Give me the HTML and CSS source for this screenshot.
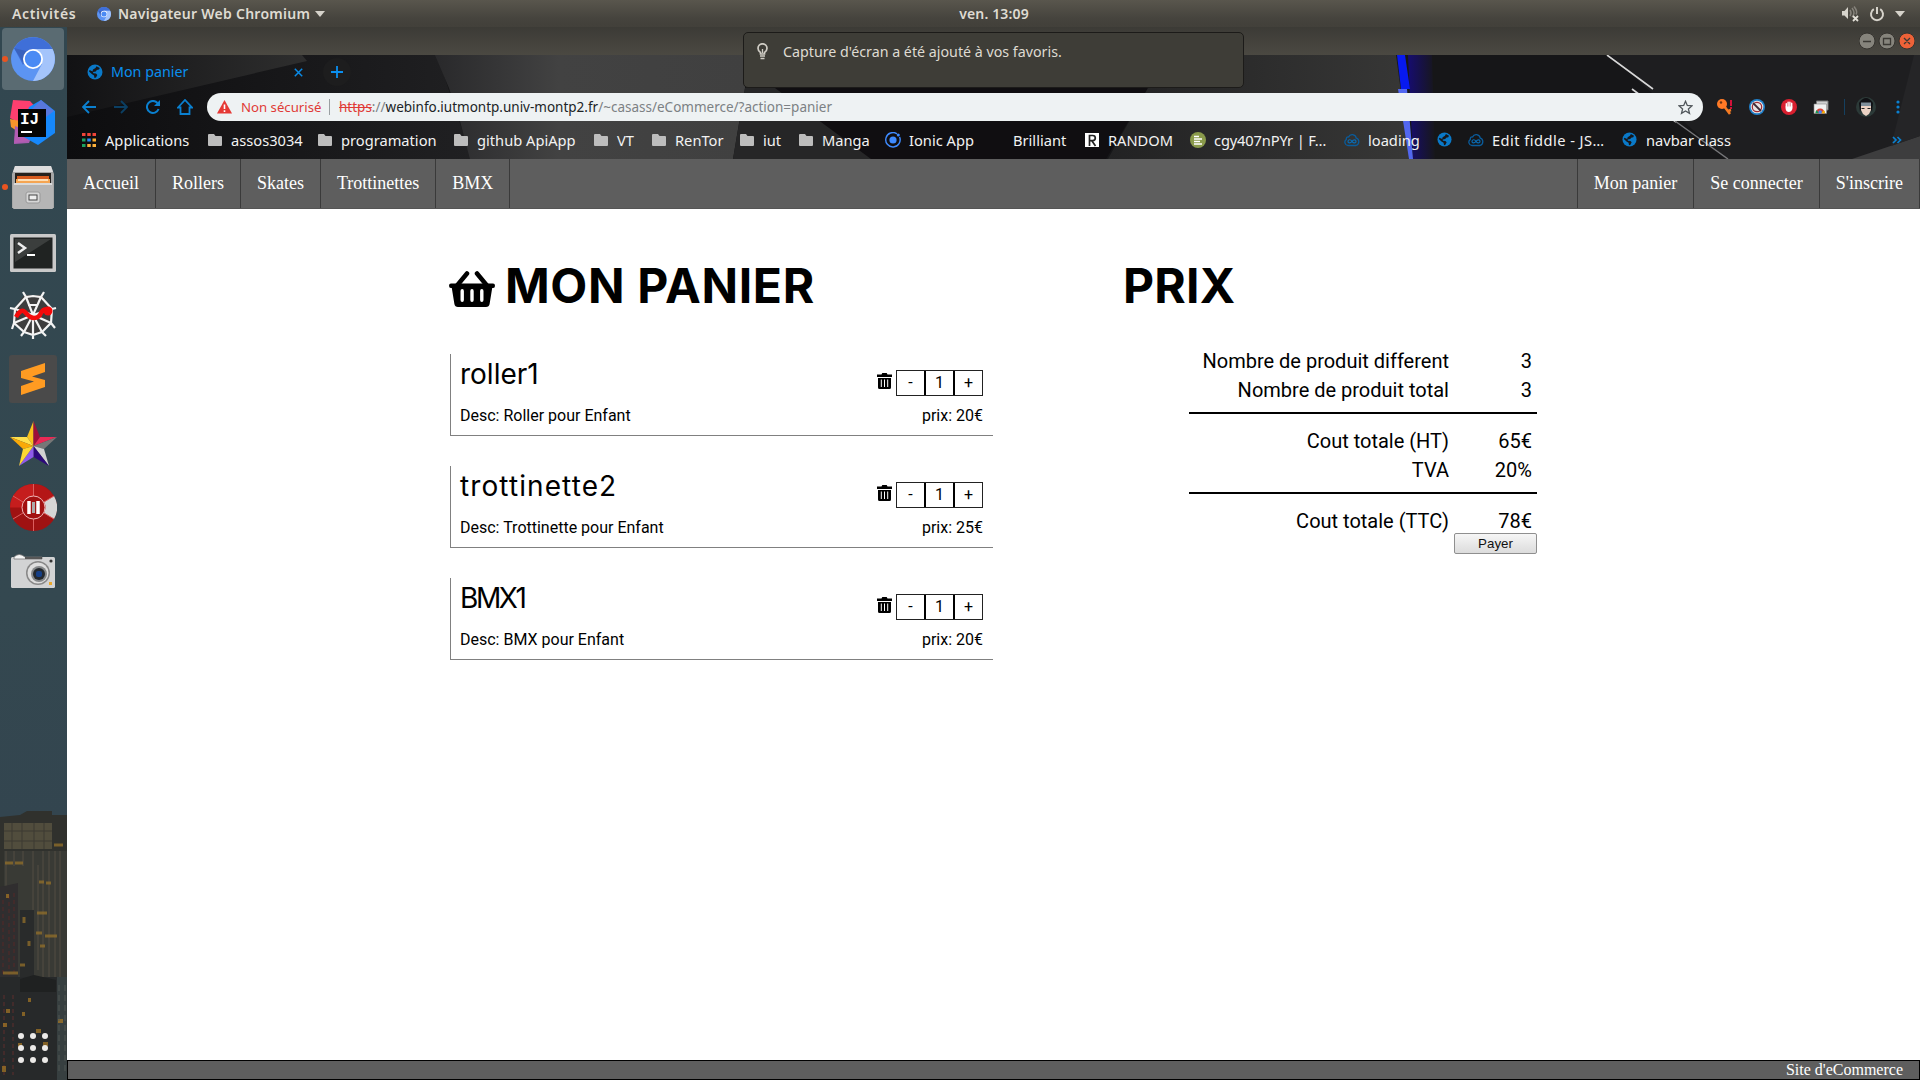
FILE: index.html
```
<!DOCTYPE html>
<html lang="fr">
<head>
<meta charset="utf-8">
<title>Mon panier</title>
<link rel="stylesheet" href="styles.css">
</head>
<body>
<svg class="defs" width="0" height="0">
  <symbol id="chromium" viewBox="0 0 44 44">
    <circle cx="22" cy="22" r="22" fill="#5c94f3"/>
    <path d="M3 11A22 22 0 0 1 41.500 12H22L12 28z" fill="#3f6fd8"/>
    <path d="M22 12H41.500A22 22 0 0 1 22 44L31 27z" fill="#a4c4fb"/>
    <path d="M3 11L13 27 15 14z" fill="#3a62bd"/>
    <circle cx="22" cy="22" r="10" fill="#fff"/><circle cx="22" cy="22" r="8.200" fill="#4a8af4"/>
  </symbol>
  <symbol id="folder" viewBox="0 0 14 14"><path d="M1 1h5l1.500 2H13a1 1 0 0 1 1 1v8a1 1 0 0 1-1 1H1a1 1 0 0 1-1-1V2a1 1 0 0 1 1-1z" fill="#bdbdbd"/></symbol>
  <symbol id="globe" viewBox="0 0 16 16"><circle cx="8" cy="8" r="7.500" fill="#0a79c8"/><path d="M9.500 2.200L12.800 4 12 5.500 9.800 6 8.800 7.500 6 8 6.300 9.300 9 9.500 10.300 11 9 13.500 7.500 14 7 11.500 4.800 10 2 7.500 2.600 6 5.500 7.500 6 5.500 8.500 4z" fill="#17171a"/></symbol>
  <symbol id="cloud" viewBox="0 0 16 14"><path d="M4 12.500a3.300 3.300 0 0 1-1.700-6C2 4.500 3.500 3.500 4.600 3.900 6 .5 11.500.7 12.300 5.200c3.300 1 3.500 6-.3 7.300z" fill="none" stroke="#0a5c9c" stroke-width="1.300"/><path d="M8 8.300C6.500 6 4 6.500 4 8.400s2.500 2.200 4 0 4-1.900 4 0-2.500 2.200-4-.1" fill="none" stroke="#0a6cb4" stroke-width="1.200"/></symbol>
  <symbol id="trash" viewBox="0 0 15 16"><path d="M0 1.500h4.500L5.300 0h4.400l.8 1.500H15V4H0z"/><path fill-rule="evenodd" d="M1 5h13v9.500a1.500 1.500 0 0 1-1.500 1.500h-10A1.500 1.500 0 0 1 1 14.500zM3.800 6.500v7.500h1V6.500zM7 6.500v7.500h1V6.500zm3.200 0v7.500h1V6.500z"/></symbol>
</svg>

<header class="topbar">
  <div class="top-left">
    <span class="activities">Activités</span>
    <svg width="14" height="14"><use href="#chromium"/></svg>
    <span class="appname">Navigateur Web Chromium</span>
    <svg width="10" height="6" viewBox="0 0 10 6"><path d="M0 0h10L5 6z" fill="#d6d3cb"/></svg>
  </div>
  <span class="clock">ven. 13:09</span>
  <div class="top-right">
    <svg width="18" height="17" viewBox="0 0 18 17"><path d="M1 6h2.500L7 2v12L3.500 10.500H1z" fill="#d6d3cb"/><path d="M9 5q2 3 0 6M11 3q4 5 0 9M13 1.500q4 5 2 8" fill="none" stroke="#85827a" stroke-width="1.500"/><path d="M12 11l5 5m0-5l-5 5" stroke="#e2dfd7" stroke-width="1.800"/></svg>
    <svg width="16" height="16" viewBox="0 0 16 16"><path d="M4.800 3.200a6 6 0 1 0 6.400 0M8 1v7" fill="none" stroke="#d6d3cb" stroke-width="2"/></svg>
    <svg width="10" height="6" viewBox="0 0 10 6"><path d="M0 0h10L5 6z" fill="#d6d3cb"/></svg>
  </div>
</header>

<div class="workspace">
  <nav class="dock">
    <svg class="skyline" width="67" height="275" viewBox="0 0 67 275">
      <path d="M0 12L20 10 27 6h25v4h15v265H0z" fill="#30312d"/>
      <path d="M4 18h48v26H4z" fill="#514d3d"/><path d="M4 26h48M4 36h48M12 18v26M22 18v26M34 18v26M44 18v26" stroke="#3d3b32"/>
      <path d="M4 46h63v126H4z" fill="#393a35"/>
      <path d="M6 46v75M14 46v15M23 46v15M33 46v120M38 60v105M43 46v126M49 46v126M55 46v126M60 46v126" stroke="#4d4940" stroke-width="1.300"/>
      <path d="M0 82l18-4v110H0z" fill="#302e2f"/><path d="M20 105h14v80H20z" fill="#292b2b"/>
      <path d="M0 172h57v103H0z" fill="#27292a"/><path d="M57 172h10v103H57z" fill="#373f40"/>
      <path d="M20 174l14-4 22 5v12H20z" fill="#1f2121"/>
      <path d="M3 95v75M9 90v80M14 88v80M4 190v80M13 190v80" stroke="#422b2b" stroke-width="2" stroke-dasharray="4 3"/>
      <path d="M5 58h8M15 58h8M54 40h9M39 77h5M46 78h5M37 108h10M36 128h6M45 131h12M40 141h5M24 112v6M29 136v5M20 160h5M3 168h15" stroke="#93702a" stroke-width="3" opacity=".75"/>
      <path d="M6 91h3M6 206h4M22 209h3M28 195h3M3 220h4M36 226h5M18 240h4M4 261v6M58 216h5M43 239h5" stroke="#a97a25" stroke-width="4" opacity=".7"/>
      <path d="M59 180v90M65 180v90" stroke="#515753" stroke-dasharray="6 4"/>
    </svg>
    <div class="slot active running"><svg width="44" height="44"><use href="#chromium"/></svg></div>
    <div class="slot"><svg width="46" height="48" viewBox="0 0 46 48">
      <path d="M3 1l17 1 8 9-8 18L0 19z" fill="#fe3f6f"/><path d="M0 20l10 2v12L1 28z" fill="#f7942b"/><path d="M5 27l18 7-4 10-15 1z" fill="#a95bb0"/>
      <path d="M31 1L45 12v22L28 46 10 36 19 8z" fill="#1688fb"/><path d="M31 1L44 12 28 24 18 14z" fill="#5877dc"/><path d="M6 28l4 8 10 6-16 2z" fill="#b45cb2"/>
      <rect x="8" y="10" width="28" height="28" fill="#050505"/><rect x="11" y="32" width="11" height="2" fill="#fff"/>
      <text class="ij" x="10" y="25">IJ</text></svg></div>
    <div class="slot running"><svg width="44" height="46" viewBox="0 0 44 46">
      <path d="M4 2h36l3 8v34H1V10z" fill="#a7a7a7"/><path d="M4 2h36l2 6H2z" fill="#dedede"/><rect x="4" y="9" width="36" height="14" fill="#26211d"/>
      <path d="M6 12h32v10H6z" fill="#d65b1f"/><path d="M5 15h34v6H5z" fill="#f5a552"/><path d="M7 16h30" stroke="#fff3da" stroke-width="1.500"/>
      <rect x="2" y="19" width="40" height="26" rx="1" fill="#b5b5b5"/><path d="M3 20h38" stroke="#dadada" stroke-width="2"/>
      <rect x="15" y="28" width="14" height="11" rx="2" fill="#d7d7d7" stroke="#999"/><rect x="18" y="31" width="8" height="5" fill="#eee" stroke="#444"/></svg></div>
    <div class="slot terminal"><svg width="46" height="38" viewBox="0 0 46 38"><rect width="46" height="38" rx="1.500" fill="#c9c9c9"/><rect x="3.500" y="3.500" width="39" height="31" fill="#202322"/><path d="M5 5h36L5 28z" fill="#3b3e3d"/><path d="M8 9l7 5-7 5" fill="none" stroke="#eee" stroke-width="2.500"/><path d="M17 21h8" stroke="#fff" stroke-width="2"/></svg></div>
    <div class="slot"><svg width="48" height="48" viewBox="0 0 48 48"><path d="M15 4h18l10 13-1 15-9 9-9 3-9-3-10-9V18z" fill="#3d3d3d"/>
      <g fill="none" stroke="#f3f3f3" stroke-width="2.200"><path d="M14 1l3 5 7-1 8 1 3-5M17 6L6 18l-5-1M6 18l-1 14-2 6M5 32l10 9-3 4M15 41l9 3v4M24 44l9-3 4 4M33 41l9-9 4 5M42 32l1-14 4-1M43 18L32 6"/><path d="M17 6l7 18 8-18M6 18l18 6 19-6M5 32l19-8 18 8M15 41l9-17 9 17M24 24v20M19 14h10"/></g>
      <path d="M7 26q5-9 9-5 5 6 9 6 5 0 7-5 3-6 10-2" fill="none" stroke="#f40a0a" stroke-width="4.500"/><circle cx="39" cy="20" r="4.500" fill="#f40a0a"/></svg></div>
    <div class="slot"><svg width="48" height="48" viewBox="0 0 48 48"><rect width="48" height="48" rx="3" fill="#4a4a4a"/><path d="M12 16l24-8v9l-13 4.500L36 25v7L12 40v-9l13-4.500L12 23z" fill="#ff9b22"/></svg></div>
    <div class="slot"><svg width="47" height="45" viewBox="0 0 47 45">
      <path d="M23.500 0v25L17 16z" fill="#fbc21c"/><path d="M23.500 0v25L30 16z" fill="#9e0f3a"/><path d="M17 16H0l23.500 9z" fill="#ffe04d"/><path d="M0 16l13 12 10.500-3z" fill="#f9a908"/><path d="M30 16h17L23.500 25z" fill="#e92a55"/><path d="M47 16L34 28l-10.500-3z" fill="#777"/><path d="M34 28l5 17L23.500 25z" fill="#d2d2d2"/><path d="M39 45l-15.500-9V25z" fill="#2d087b"/><path d="M23.500 36L9 45l14.500-20z" fill="#8f5aea"/><path d="M9 45l4-17 10.500-3z" fill="#ffd832"/></svg></div>
    <div class="slot"><svg width="47" height="47" viewBox="0 0 47 47"><circle cx="23.500" cy="23.500" r="23.500" fill="#9f1212"/><path d="M23.500 0A23.500 23.500 0 0 0 0 23.500h23.500z" fill="#c51d1d"/><path d="M23.500 0a23.500 23.500 0 0 1 20 12L23.500 23.500z" fill="#b41616"/><path d="M44 12a23.500 23.500 0 0 1 0 23L34 29q3-6 0-11z" fill="#d6d6d6"/><path d="M23.500 0v12M23.500 35v12M3 12l10 6M3 35l10-6M44 12l-10 6M44 35l-10-6" stroke="#db5e5e"/><circle cx="23.500" cy="23.500" r="11.500" fill="#a31111" stroke="#f0b7b7"/><path d="M19 17v13M28 17v13" stroke="#fff" stroke-width="3.500"/><path d="M23.500 18v11" stroke="#aaa" stroke-width="3"/></svg></div>
    <div class="slot"><svg width="44" height="34" viewBox="0 0 44 34"><rect y="3" width="44" height="31" rx="1.500" fill="#d2d3d4"/><path d="M3 3q5-5 11 0h17v2H3z" fill="#f4f4f4" stroke="#777" stroke-width=".8"/><path d="M14 4h17" stroke="#333" stroke-width="1.500"/><circle cx="27" cy="19" r="12" fill="#888"/><circle cx="27" cy="19" r="10.500" fill="#dedede"/><circle cx="28" cy="20" r="8" fill="#85888a"/><circle cx="28" cy="20" r="6" fill="#24292f"/><rect x="25" y="17" width="6" height="6" rx="2" fill="#153f87"/><circle cx="40" cy="7" r="1.600" fill="#333"/><rect x="38" y="28" width="3" height="3" fill="#eba92c"/></svg></div>
    <div class="apps-grid"><i></i><i></i><i></i><i></i><i></i><i></i><i></i><i></i><i></i></div>
  </nav>

  <div class="window">
    <div class="titlebar">
      <svg width="56" height="18" viewBox="0 0 56 18"><g stroke="#35332f"><circle cx="8" cy="9" r="8" fill="#86847c"/><circle cx="28" cy="9" r="8" fill="#86847c"/><circle cx="48" cy="9" r="8" fill="#ee6238"/></g><path d="M4 9.500h8M24.500 6.500h7v6h-7zM45 6l6 6m0-6l-6 6" fill="none" stroke="#3b3934" stroke-width="1.300"/></svg>
    </div>

    <div class="chrome">
      <svg class="backdrop" width="1853" height="104" viewBox="67 55 1853 104">
        <defs>
          <linearGradient id="g1"><stop offset="0" stop-color="#121214"/><stop offset="1" stop-color="#2e2e2e"/></linearGradient>
          <linearGradient id="g2"><stop offset="0" stop-color="#29292b"/><stop offset=".4" stop-color="#424242"/><stop offset="1" stop-color="#404040"/></linearGradient>
          <linearGradient id="g3"><stop offset="0" stop-color="#222223"/><stop offset="1" stop-color="#373736"/></linearGradient>
          <linearGradient id="g4"><stop offset="0" stop-color="#160c70"/><stop offset="1" stop-color="#17171a"/></linearGradient>
          <linearGradient id="g5"><stop offset="0" stop-color="#0d0d0f"/><stop offset="1" stop-color="#202022"/></linearGradient>
        </defs>
        <path d="M67 55h1853v104H67z" fill="#161618"/>
        <path d="M67 55h370l35 104H67z" fill="url(#g5)"/>
        <path d="M67 55h235l5 6L67 117z" fill="url(#g1)"/>
        <path d="M435 55h310v33l-6 35-6 36H470L460 121 449 88z" fill="url(#g2)"/>
        <path d="M745 88h245v35h-5l-40 36H733z" fill="#262627"/>
        <path d="M775 88l96 71h235l42-71z" fill="#100e11"/>
        <path d="M1148 88l35-33h213l14 104h-302z" fill="url(#g3)"/>
        <path d="M1408 55h24l3 104h-22z" fill="url(#g4)"/>
        <path d="M1397 55h8l5 34h-9z" fill="#0719f0"/><path d="M1398 89h9l6 70h-4z" fill="#5267f0"/>
        <path d="M1610 55h310v104h-195z" fill="#1e1e20"/>
        <path d="M1607 55l46 34M1632 89l44 33" stroke="#d8d8d8" stroke-width="1.600"/><path d="M1675 121l53 38" stroke="#77777a" stroke-width="1.400"/>
        <path d="M1852 159l68-23v23z" fill="#3d3d3e"/><path d="M1914 55h6v81l-29 10z" fill="#252527"/>
      </svg>

      <div class="tabstrip">
        <svg width="16" height="16"><use href="#globe"/></svg>
        <span class="tab-title">Mon panier</span>
        <svg class="tab-close" width="9" height="9" viewBox="0 0 9 9"><path d="M.8.8l7.400 7.400m0-7.400L.8 8.200" stroke="#0a8ae6" stroke-width="1.500"/></svg>
        <span class="new-tab"><svg width="12" height="12" viewBox="0 0 12 12"><path d="M6 0v12M0 6h12" stroke="#0a8ff0" stroke-width="1.800"/></svg></span>
      </div>

      <div class="toolbar">
        <svg width="14" height="14" viewBox="0 0 14 14"><path d="M14 7H1.500M7 1L1 7l6 6" fill="none" stroke="#0a80d0" stroke-width="1.900"/></svg>
        <svg width="14" height="14" viewBox="0 0 14 14"><path d="M0 7h12.500M7 1l6 6-6 6" fill="none" stroke="#0b3f63" stroke-width="1.900"/></svg>
        <svg width="14" height="14" viewBox="0 0 14 14"><path d="M12.600 9A6 6 0 1 1 11.500 3" fill="none" stroke="#0a80d0" stroke-width="2"/><path d="M14 0v6H8z" fill="#0a80d0"/></svg>
        <svg class="home" width="16" height="16" viewBox="0 0 16 16"><path d="M1 8.500L8 1l7 7.500h-2.500V15h-9V8.500z" fill="none" stroke="#0a80d0" stroke-width="1.800"/></svg>
        <div class="omnibox">
          <svg width="15" height="14" viewBox="0 0 15 14"><path d="M7.500 0L15 13.500H0z" fill="#e53935"/><path d="M7.500 4.500v4.500M7.500 10.200v1.800" stroke="#fff" stroke-width="1.600"/></svg>
          <span class="insecure">Non sécurisé</span>
          <span class="divider"></span>
          <span class="url"><span class="scheme">https</span><span class="sep">://</span><span class="host">webinfo.iutmontp.univ-montp2.fr</span><span class="path">/~casass/eCommerce/?action=panier</span></span>
          <svg width="15" height="15" viewBox="0 0 15 15"><path d="M7.500 1.300l1.800 4.200 4.600.4-3.500 3 1.100 4.500-4-2.400-4 2.400 1.100-4.500-3.500-3 4.600-.4z" fill="none" stroke="#50565a" stroke-width="1.300"/></svg>
        </div>
        <div class="extensions">
          <svg width="16" height="16" viewBox="0 0 16 16"><path d="M7 7l6 8M11 12l3-1" stroke="#f47a22" stroke-width="2.600"/><circle cx="5" cy="5" r="5" fill="#ff7a26"/><circle cx="4" cy="3.500" r="1.200" fill="#6b3513"/><path d="M14 1v6M14 8v2" stroke="#d3123a" stroke-width="2"/></svg>
          <svg width="16" height="16" viewBox="0 0 16 16"><circle cx="8" cy="8" r="8" fill="#1f7fc9"/><circle cx="8" cy="8" r="6.300" fill="#e9e4e4"/><circle cx="8" cy="8" r="4.700" fill="none" stroke="#9e2b34" stroke-width="1.200"/><path d="M4 4l8 8" stroke="#3c2c38" stroke-width="1.800"/></svg>
          <svg width="16" height="16" viewBox="0 0 16 16"><circle cx="8" cy="8" r="8" fill="#d81f2f"/><path d="M5.300 8V4.800M7.100 8V3.300M8.900 8V3.300M10.700 8V4.300" stroke="#fff" stroke-width="1.400" stroke-linecap="round"/><path d="M4.600 7.500h6.800V10q-1 3-3.600 3T4.600 10z" fill="#fff"/></svg>
          <svg width="16" height="16" viewBox="0 0 16 16"><path d="M3.500 2h11.500v9H3.500z" fill="#d0d0d0" stroke="#777"/><path d="M1 5h12.500v9.500H1z" fill="#f2f2f2" stroke="#888" stroke-width=".6"/><path d="M2.500 14.200a4.700 4.700 0 0 1 9.400 0z" fill="#db4437"/><path d="M2.500 14.200q0-2 1.200-3.200l2.300 3.200z" fill="#0f9d58"/><path d="M11.900 14.200q0-2-1.200-3.200l-2.300 3.200z" fill="#f4b400"/><circle cx="7.200" cy="13" r="1.700" fill="#4285f4"/></svg>
          <span class="ext-line"></span>
          <svg width="20" height="20" viewBox="0 0 20 20"><circle cx="10" cy="10" r="10" fill="#2c3a38"/><path d="M3 6q7-10 14 0l-1 9-2-5-4-2-4 2-2 5z" fill="#101014"/><path d="M5 9h10v4l-2 4-3 2-3-2-2-4z" fill="#ecd2c4"/><path d="M5 5.500h10V9H5z" fill="#7f8e9a"/><path d="M5.500 11.500h3M11.500 11.500h3" stroke="#222" stroke-width="1.200"/></svg>
          <svg width="4" height="14" viewBox="0 0 4 14"><circle cx="2" cy="2" r="1.600" fill="#0a80d0"/><circle cx="2" cy="7" r="1.600" fill="#0a80d0"/><circle cx="2" cy="12" r="1.600" fill="#0a80d0"/></svg>
        </div>
      </div>

      <div class="bookmarks">
        <span class="bm"><svg width="14" height="14" viewBox="0 0 14 14"><path d="M0 1.500h14" stroke="#f04438" stroke-width="3" stroke-dasharray="3.500 1.750"/><path d="M0 7h3.500" stroke="#1aa260" stroke-width="3"/><path d="M5.250 7h3.500" stroke="#2a8af4" stroke-width="3"/><path d="M10.500 7H14" stroke="#f9ab2d" stroke-width="3"/><path d="M0 12.500h3.500" stroke="#1aa260" stroke-width="3"/><path d="M5.250 12.500H14" stroke="#fbb03b" stroke-width="3" stroke-dasharray="3.500 1.750"/></svg>Applications</span>
        <span class="bm"><svg width="14" height="14"><use href="#folder"/></svg>assos3034</span>
        <span class="bm"><svg width="14" height="14"><use href="#folder"/></svg>programation</span>
        <span class="bm"><svg width="14" height="14"><use href="#folder"/></svg>github ApiApp</span>
        <span class="bm"><svg width="14" height="14"><use href="#folder"/></svg>VT</span>
        <span class="bm"><svg width="14" height="14"><use href="#folder"/></svg>RenTor</span>
        <span class="bm"><svg width="14" height="14"><use href="#folder"/></svg>iut</span>
        <span class="bm"><svg width="14" height="14"><use href="#folder"/></svg>Manga</span>
        <span class="bm site"><svg width="16" height="16" viewBox="0 0 16 16"><path d="M12 1.800A7.200 7.200 0 1 0 14.600 5" fill="none" stroke="#3f8bff" stroke-width="1.400"/><circle cx="8" cy="8" r="3.600" fill="#3f8bff"/><circle cx="13.300" cy="3" r="1.500" fill="#3f8bff"/></svg>Ionic App</span>
        <span class="bm site"><span class="no-icon"></span>Brilliant</span>
        <span class="bm"><svg width="14" height="14" viewBox="0 0 14 14"><path d="M0 0h14v14H0z" fill="#fff"/><path d="M4.500 13V2.500h3.200a2.500 2.500 0 0 1 0 5.200H4.500M7 8l3.500 5" fill="none" stroke="#222" stroke-width="1.700"/></svg>RANDOM</span>
        <span class="bm site code"><svg width="16" height="16" viewBox="0 0 16 16"><circle cx="8" cy="8" r="8" fill="#8a9a4b"/><path d="M4 4.500h5M4 7h8M4 9.500h6M4 12h8" stroke="#fff" stroke-width="1.300"/></svg>cgy407nPYr | F…</span>
        <span class="bm site"><svg width="16" height="14"><use href="#cloud"/></svg>loading</span>
        <span class="bm"><svg width="15" height="15"><use href="#globe"/></svg></span>
        <span class="bm site fiddle"><svg width="16" height="14"><use href="#cloud"/></svg>Edit fiddle - JS…</span>
        <span class="bm"><svg width="15" height="15"><use href="#globe"/></svg>navbar class</span>
        <svg width="10" height="8" viewBox="0 0 10 8"><path d="M1 1l3 3-3 3M5.500 1l3 3-3 3" fill="none" stroke="#0a80d0" stroke-width="1.700"/></svg>
      </div>
    </div>

    <div class="page">
      <ul class="site-nav">
        <li>Accueil</li><li>Rollers</li><li>Skates</li><li>Trottinettes</li><li>BMX</li>
        <li class="spacer"></li>
        <li>Mon panier</li><li>Se connecter</li><li>S'inscrire</li>
      </ul>
      <main class="content">
        <section class="basket">
          <h1><svg width="46" height="36" viewBox="0 0 46 36"><path d="M8.500 14L18 2.500M37.500 14L28 2.500" stroke="#000" stroke-width="4.500" stroke-linecap="round"/><path fill-rule="evenodd" d="M2 12.500h42q2 0 2 2.300T44 17h-.8l-2.600 16q-.5 3-3.600 3H9q-3.100 0-3.600-3L2.800 17H2q-2 0-2-2.200t2-2.300zM11.500 20v9q0 2 1.700 2t1.700-2v-9q0-2-1.700-2t-1.700 2zM21.300 20v9q0 2 1.700 2t1.700-2v-9q0-2-1.700-2t-1.700 2zM31.100 20v9q0 2 1.700 2t1.700-2v-9q0-2-1.700-2t-1.700 2z"/></svg><span>MON PANIER</span></h1>
          <article class="item">
            <h2>roller1</h2>
            <div class="qty"><svg width="15" height="16"><use href="#trash"/></svg><div class="stepper"><b>-</b><b>1</b><b>+</b></div></div>
            <p>Desc: Roller pour Enfant</p><p class="price">prix: 20€</p>
          </article>
          <article class="item">
            <h2 class="wide">trottinette2</h2>
            <div class="qty"><svg width="15" height="16"><use href="#trash"/></svg><div class="stepper"><b>-</b><b>1</b><b>+</b></div></div>
            <p>Desc: Trottinette pour Enfant</p><p class="price">prix: 25€</p>
          </article>
          <article class="item">
            <h2 class="tight">BMX1</h2>
            <div class="qty"><svg width="15" height="16"><use href="#trash"/></svg><div class="stepper"><b>-</b><b>1</b><b>+</b></div></div>
            <p>Desc: BMX pour Enfant</p><p class="price">prix: 20€</p>
          </article>
        </section>
        <section class="summary">
          <h1>PRIX</h1>
          <div class="totals">
            <div class="group"><span>Nombre de produit different</span><span>3</span><span>Nombre de produit total</span><span>3</span></div>
            <div class="group"><span>Cout totale (HT)</span><span>65€</span><span>TVA</span><span>20%</span></div>
            <div class="group"><span>Cout totale (TTC)</span><span>78€</span></div>
            <button class="pay">Payer</button>
          </div>
        </section>
      </main>
      <footer class="footer">Site d'eCommerce</footer>
    </div>
  </div>
</div>

<div class="toast">
  <svg width="11" height="17" viewBox="0 0 11 17"><path d="M3.500 11V9.500Q1 8 1 5.300a4.500 4.500 0 0 1 9 0Q10 8 7.500 9.500V11z" fill="none" stroke="#d0cdc5" stroke-width="1.700"/><path d="M5.500 10V6M3 13h5M3.500 15.500h4" stroke="#d0cdc5" stroke-width="1.300"/></svg>
  <span>Capture d'écran a été ajouté à vos favoris.</span>
</div>
</body>
</html>
```
FILE: styles.css
```
* { box-sizing: border-box; }
body {
  margin: 0;
  width: 1920px;
  height: 1080px;
  overflow: hidden;
  display: flex;
  flex-direction: column;
  font-family: "Noto Sans", "Open Sans", sans-serif;
  background: #fff;
}
svg { display: block; flex: none; }
.defs { position: absolute; }
h1, h2, p, ul { margin: 0; padding: 0; }

/* Desktop top bar */
.topbar {
  flex: none;
  height: 27px;
  padding: 0 15px 0 12px;
  display: grid;
  grid-template-columns: 1fr auto 1fr;
  align-items: center;
  background: linear-gradient(#59564d, #45433d 70%, #42403a);
  color: #dfdbd2;
  font-size: 14px;
  font-weight: 600;
  line-height: 26px;
}
.top-left, .top-right { display: flex; align-items: center; }
.activities { width: 85px; letter-spacing: .65px; }
.appname { width: 204px; padding-left: 7px; letter-spacing: .26px; }
.topbar .clock { padding-left: 71px; letter-spacing: .15px; }
.top-right { justify-content: flex-end; gap: 10px; }

.workspace { flex: 1; display: flex; min-height: 0; }

/* Dock */
.dock {
  position: relative;
  flex: none;
  width: 67px;
  display: flex;
  flex-direction: column;
  background: linear-gradient(#324750, #344850 55%, #33454f 75%);
}
.skyline { position: absolute; left: 0; bottom: 0; }
.slot {
  position: relative;
  width: 62px;
  height: 62px;
  margin: 1px 0 1px 2px;
  display: flex;
  align-items: center;
  justify-content: center;
  border-radius: 4px;
}
.slot.active { background: #5a6b72; }
.slot.terminal { padding-top: 3px; }
.slot.running::before {
  content: "";
  position: absolute;
  left: 0;
  top: 28px;
  width: 6px;
  height: 6px;
  border-radius: 50%;
  background: #e95420;
}
.ij { font: bold 16px "Liberation Mono", monospace; fill: #fff; }
.apps-grid {
  position: relative;
  margin: auto 0 17px 18px;
  display: grid;
  grid-template-columns: repeat(3, 6px);
  gap: 6px;
}
.apps-grid i { width: 6px; height: 6px; border-radius: 50%; background: #eceae8; }

/* Browser window */
.window { flex: 1; display: flex; flex-direction: column; min-width: 0; }
.titlebar {
  flex: none;
  height: 28px;
  padding: 0 5px 0 0;
  display: flex;
  align-items: center;
  justify-content: flex-end;
  background: linear-gradient(#3c3b36, #4b4942);
}
.chrome {
  position: relative;
  flex: none;
  height: 104px;
  border-bottom: 1px solid #3b3b3b;
}
.backdrop { position: absolute; left: 0; top: 0; }
.tabstrip, .toolbar, .bookmarks { position: relative; display: flex; align-items: center; }
.tabstrip { height: 34px; padding-left: 20px; }
.tab-title { width: 190px; padding-left: 8px; font-size: 14.300px; line-height: 18px; padding-bottom: 1px; color: #0a8ff0; }
.new-tab {
  width: 28px;
  height: 28px;
  margin-left: 20px;
  border-radius: 50%;
  display: flex;
  align-items: center;
  justify-content: center;
  background: #1d1d1e;
}
.tab-close { margin-left: 1px; }
.toolbar { height: 36px; padding-left: 15px; gap: 18px; }
.home { margin-left: -1px; }
.omnibox {
  width: 1496px;
  height: 28px;
  margin-left: -4px;
  padding: 0 10px;
  display: flex;
  align-items: center;
  border-radius: 14px;
  background: #eef2f3;
  font-size: 13.500px;
}
.insecure { width: 88px; margin-left: 9px; color: #e03a36; font-size: 13.200px; }
.divider { width: 1px; height: 16px; background: #9a9fa2; }
.url { flex: 1; margin-left: 9px; color: #7c8184; }
.scheme { color: #e03a36; text-decoration: line-through; }
.host { color: #202426; }
.extensions { display: flex; align-items: center; gap: 16px; margin-left: -4px; }
.ext-line { width: 1px; height: 16px; margin-left: -1px; background: #15405f; }
.extensions svg:last-child { margin-left: 4px; }
.extensions svg:nth-last-child(2) { margin-left: -5px; }
.bookmarks {
  height: 29px;
  padding-left: 15px;
  display: grid;
  grid-template-columns: 126px 110px 136px 140px 58px 88px 59px 86px 104px 96px 105px 154px 93px 31px 154px 270px auto;
  justify-content: start;
  color: #f2f2f2;
  font-size: 14.670px;
}
.bm { display: flex; align-items: center; gap: 9px; white-space: nowrap; line-height: 28px; }
.bm.site { gap: 8px; }
.code { letter-spacing: -.15px; }
.fiddle { letter-spacing: .45px; }
.no-icon { width: 16px; }

/* Shop page */
.page { flex: 1; min-height: 0; display: flex; flex-direction: column; background: #fff; }
.site-nav {
  flex: none;
  display: flex;
  height: 50px;
  border-bottom: 1px solid #555;
  list-style: none;
  background: #5e5e5e;
  color: #fff;
  font: 18px/21px "Liberation Serif", serif;
}
.site-nav li { padding: 14px 16px; border-right: 1px solid #3a3a3a; white-space: nowrap; }
.site-nav .spacer { flex: 1; }
.content { flex: 1; display: flex; padding-left: 382px; }
.content h1 {
  display: flex;
  align-items: center;
  gap: 10px;
  height: 64px;
  font: 700 48px/64px Inter, sans-serif;
  letter-spacing: .65px;
}
.content h1 svg { margin-top: 5px; }
.basket { width: 544px; padding-top: 45px; }
.basket h1 { margin-bottom: 36px; }
.item {
  height: 82px;
  margin: 0 0 30px 1px;
  padding: 0 10px 0 9px;
  border-left: 1px solid #808080;
  border-bottom: 1px solid #808080;
  display: grid;
  grid-template-columns: 1fr auto;
  grid-template-rows: 48px 28px;
  font: 16px/28px Roboto, sans-serif;
}
.item h2 { font: 400 28px/40px Inter, sans-serif; color: #000; }
.item .wide { letter-spacing: 1.100px; }
.item .tight { letter-spacing: -2.400px; }
.qty { display: flex; align-items: flex-start; gap: 4px; padding-top: 16px; }
.qty svg { margin-top: 3px; }
.stepper { display: flex; width: 87px; height: 26px; border: 1px solid #222; }
.stepper b { flex: 1; font-weight: 400; line-height: 24px; text-align: center; }
.stepper b + b { border-left: 2px solid #000; }
.price { text-align: right; }

.summary { margin-left: 130px; padding-top: 45px; }
.summary h1 { margin-bottom: 29px; letter-spacing: .2px; }
.totals {
  width: 348px;
  margin-left: 66px;
  display: flex;
  flex-direction: column;
  align-items: flex-end;
  font: 20px/29px Roboto, sans-serif;
}
.group {
  width: 100%;
  padding: 0 5px 7px 0;
  display: grid;
  grid-template-columns: 1fr 83px;
  text-align: right;
}
.group + .group { border-top: 2px solid #000; padding-top: 13px; }
.pay {
  width: 83px;
  height: 21px;
  margin-top: -10px;
  padding: 0;
  border: 1px solid #8f8f8f;
  border-radius: 2px;
  background: linear-gradient(#f6f6f6, #dcdcdc);
  font: 13.330px "Liberation Sans", sans-serif;
  color: #111;
}
.footer {
  flex: none;
  height: 20px;
  padding-right: 16px;
  border: 1px solid #000;
  background: #5e5e5e;
  color: #fff;
  font: 16px/18px "Liberation Serif", serif;
  text-align: right;
}

/* Notification */
.toast {
  position: absolute;
  left: 743px;
  top: 32px;
  width: 501px;
  height: 56px;
  padding: 10px 0 0 13px;
  display: flex;
  align-items: flex-start;
  gap: 15px;
  border: 1px solid #1c1b19;
  border-radius: 5px;
  background: #3e3d37;
  color: #dfdbd2;
  font-size: 14.250px;
  line-height: 18px;
}
```
